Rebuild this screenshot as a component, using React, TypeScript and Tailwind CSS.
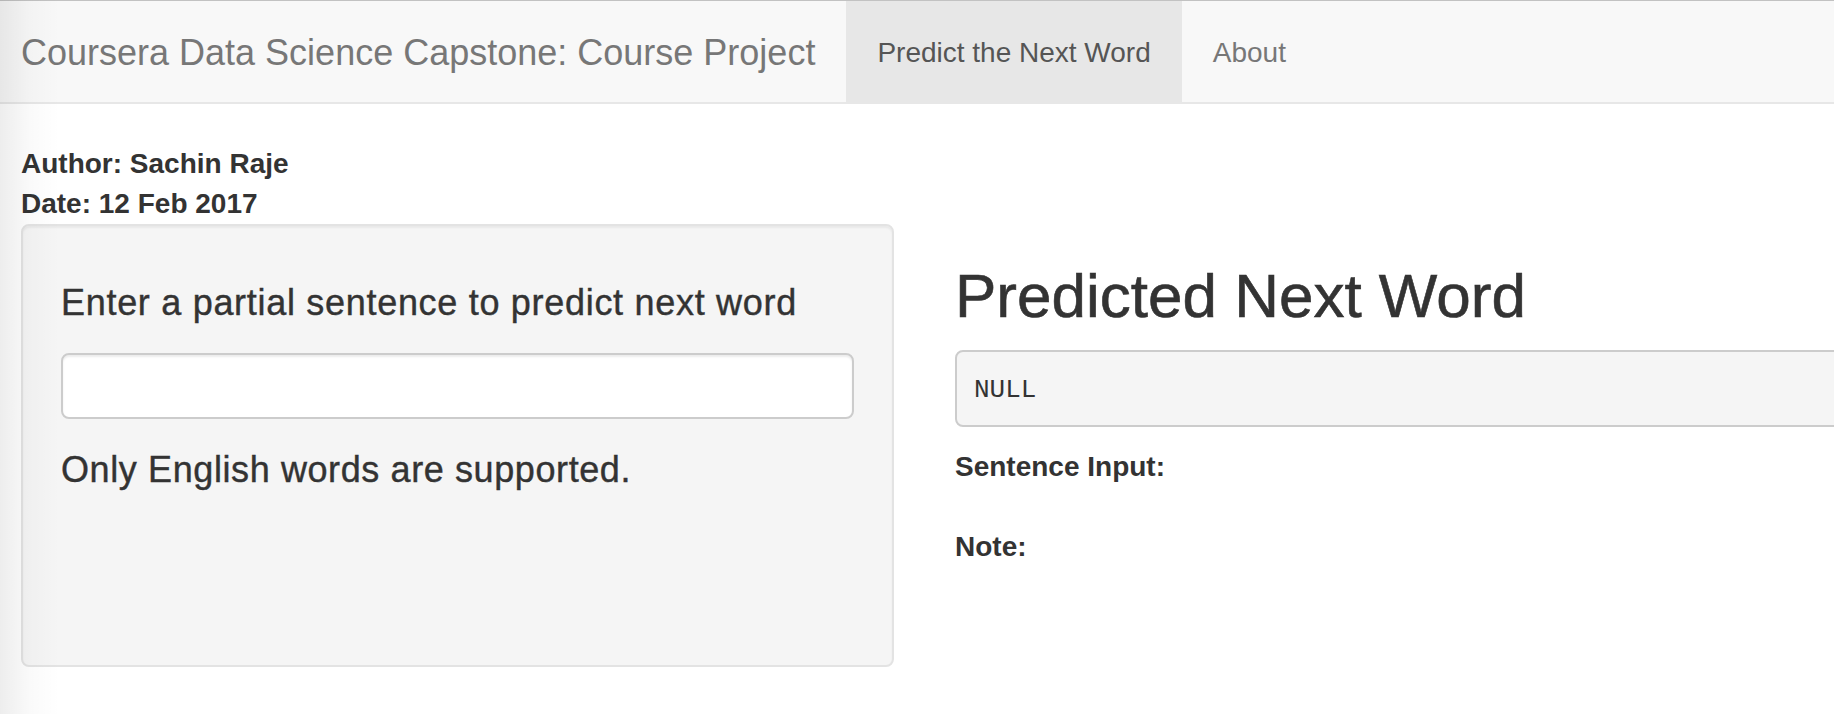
import { useState } from "react";

const NAV_ITEMS = ["Predict the Next Word", "About"];

export default function App() {
  const [active, setActive] = useState(NAV_ITEMS[0]);
  const [sentence, setSentence] = useState("");

  return (
    <div className="relative min-h-screen overflow-hidden bg-white font-['Liberation_Sans',Arial,sans-serif] text-[#333]">
      {/* Navbar */}
      <nav className="flex h-[104px] items-stretch border-t border-b-2 border-t-[#c2c2c2] border-b-[#e7e7e7] bg-[#f8f8f8]">
        <a className="flex items-center pl-[21px] pr-[31px] pt-[2px] text-[36px] leading-none text-[#777]">
          Coursera Data Science Capstone: Course Project
        </a>
        <ul className="flex items-stretch">
          {NAV_ITEMS.map((item) => (
            <li key={item}>
              <button
                type="button"
                onClick={() => setActive(item)}
                className={`flex h-full items-center px-[31px] pt-[2px] text-[28px] leading-none ${
                  active === item ? "bg-[#e7e7e7] text-[#555]" : "text-[#777]"
                }`}
              >
                {item}
              </button>
            </li>
          ))}
        </ul>
      </nav>

      {/* Body */}
      <div className="pl-[21px] pt-[40px]">
        <p className="text-[28px] font-bold leading-[40px]">Author: Sachin Raje</p>
        <p className="text-[28px] font-bold leading-[40px]">Date: 12 Feb 2017</p>

        <div className="flex items-start gap-[61px]">
          {/* Sidebar */}
          <div className="h-[443px] w-[873px] shrink-0 rounded-[8px] border-2 border-[#e3e3e3] bg-[#f5f5f5] px-[38px] pt-[57px] shadow-[inset_0_2px_2px_rgba(0,0,0,0.05)]">
            <label className="block text-[36px] leading-[40px] tracking-[0.7px] [-webkit-text-stroke:0.4px_#333]">
              Enter a partial sentence to predict next word
            </label>
            <input
              type="text"
              value={sentence}
              onChange={(e) => setSentence(e.target.value)}
              className="mt-[30px] block h-[66px] w-full rounded-[8px] border-2 border-[#ccc] bg-white px-[24px] text-[28px] shadow-[inset_0_2px_2px_rgba(0,0,0,0.075)] outline-none"
            />
            <p className="mt-[31px] text-[36px] leading-[40px] tracking-[0.6px] [-webkit-text-stroke:0.4px_#333]">
              Only English words are supported.
            </p>
          </div>

          {/* Main */}
          <div className="-mr-[200px] flex-1 pt-[38px]">
            <h2 className="text-[62px] leading-[68px] [-webkit-text-stroke:0.6px_#333]">Predicted Next Word</h2>
            <pre className="mt-[20px] rounded-[8px] border-2 border-[#ccc] bg-[#f5f5f5] px-[17px] pb-[16px] pt-[20px] font-['Liberation_Mono',monospace] text-[26px] leading-[37px] text-[#333]">
              NULL
            </pre>
            <p className="mt-[20px] text-[28px] font-bold leading-[40px]">Sentence Input:</p>
            <p className="mt-[40px] text-[28px] font-bold leading-[40px]">Note:</p>
          </div>
        </div>
      </div>

      {/* left window shadow */}
      <div className="pointer-events-none absolute left-0 top-0 h-full w-[60px] bg-gradient-to-r from-black/[0.07] via-black/[0.02] to-transparent" />
    </div>
  );
}
